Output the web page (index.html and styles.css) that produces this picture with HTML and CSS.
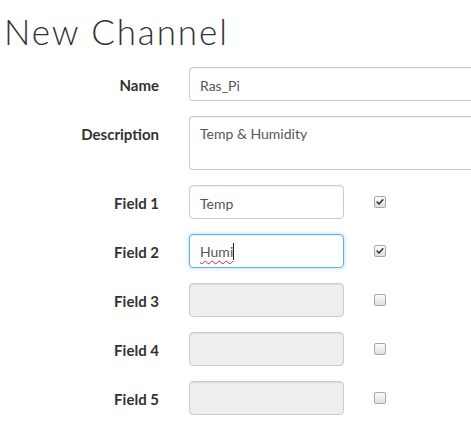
FILE: index.html
```html
<!DOCTYPE html>
<html lang="en">
<head>
<meta charset="utf-8">
<title>New Channel</title>
<link rel="stylesheet" href="styles.css">
</head>
<body>
<h1 class="title">New Channel</h1>
<form class="channel-form">
  <div class="row">
    <label class="lbl">Name</label>
    <input class="ctl ctl-wide" type="text" value="Ras_Pi">
  </div>
  <div class="row">
    <label class="lbl">Description</label>
    <div class="ctl ctl-wide ctl-area">Temp &amp; Humidity</div>
  </div>
  <div class="row">
    <label class="lbl">Field 1</label>
    <input class="ctl ctl-field" type="text" value="Temp">
    <span class="chk chk-on"><svg viewBox="0 0 12 12" width="12" height="12"><path d="M2.6 6.2 L4.9 8.4 L9.4 3.4" fill="none" stroke="#333" stroke-width="1.9" stroke-linecap="round" stroke-linejoin="round"/></svg></span>
  </div>
  <div class="row">
    <label class="lbl">Field 2</label>
    <div class="ctl ctl-field ctl-focus"><span class="misspelt">Humi</span><span class="caret"></span></div>
    <span class="chk chk-on"><svg viewBox="0 0 12 12" width="12" height="12"><path d="M2.6 6.2 L4.9 8.4 L9.4 3.4" fill="none" stroke="#333" stroke-width="1.9" stroke-linecap="round" stroke-linejoin="round"/></svg></span>
  </div>
  <div class="row">
    <label class="lbl">Field 3</label>
    <input class="ctl ctl-field ctl-off" type="text" disabled>
    <span class="chk"></span>
  </div>
  <div class="row">
    <label class="lbl">Field 4</label>
    <input class="ctl ctl-field ctl-off" type="text" disabled>
    <span class="chk"></span>
  </div>
  <div class="row">
    <label class="lbl">Field 5</label>
    <input class="ctl ctl-field ctl-off" type="text" disabled>
    <span class="chk"></span>
  </div>
</form>
</body>
</html>
```
FILE: styles.css
```css
html, body {
  margin: 0;
  padding: 0;
  background: #fff;
  overflow: hidden;
}
body {
  font-family: "Lato", "Liberation Sans", sans-serif;
  color: #333;
  width: 471px;
  height: 425px;
}
.title {
  margin: 10px 0 0 4px;
  font-family: "Lato", sans-serif;
  font-weight: 300;
  font-size: 35px;
  line-height: 42px;
  color: #333;
  letter-spacing: 1.9px;
}
.channel-form {
  margin-top: 15px;
  display: flex;
  flex-direction: column;
  gap: 15px;
}
.row {
  display: flex;
  align-items: flex-start;
  gap: 30px;
}
.lbl {
  width: 159px;
  flex: none;
  text-align: right;
  font-weight: 700;
  font-size: 15px;
  line-height: 20px;
  padding-top: 8px;
  color: #333;
}
.ctl {
  box-sizing: border-box;
  flex: none;
  height: 34px;
  margin: 0;
  padding: 7px 10px 5px;
  border: 1px solid #ccc;
  border-radius: 4px;
  background: #fff;
  font-family: "Lato", sans-serif;
  font-size: 14px;
  line-height: 20px;
  color: #555;
  box-shadow: inset 0 1px 1px rgba(0,0,0,0.075);
  outline: none;
}
.ctl-wide {
  flex: 1;
  min-width: 0;
  border-right: none;
  border-radius: 4px 0 0 4px;
}
.ctl-area {
  height: 54px;
}
.ctl-field {
  width: 155px;
}
.ctl-focus {
  border-color: #66afe9;
  box-shadow: inset 0 1px 1px rgba(0,0,0,0.075), 0 0 4px rgba(102,175,233,0.5);
  display: flex;
  align-items: flex-start;
}
.ctl-off {
  background: #eee;
}
.misspelt {
  text-decoration: underline wavy #d22;
  text-decoration-thickness: 1px;
  text-underline-offset: 3px;
}
.caret {
  display: inline-block;
  width: 1px;
  height: 17px;
  margin-top: 1px;
  background: #222;
}
.chk {
  box-sizing: border-box;
  width: 12px;
  height: 12px;
  flex: none;
  align-self: center;
  border: 1px solid #a8a8a8;
  border-radius: 2px;
  background: linear-gradient(#fcfcfc, #dedede);
  display: flex;
  align-items: center;
  justify-content: center;
}
.chk svg {
  display: block;
  width: 10px;
  height: 10px;
}
```
